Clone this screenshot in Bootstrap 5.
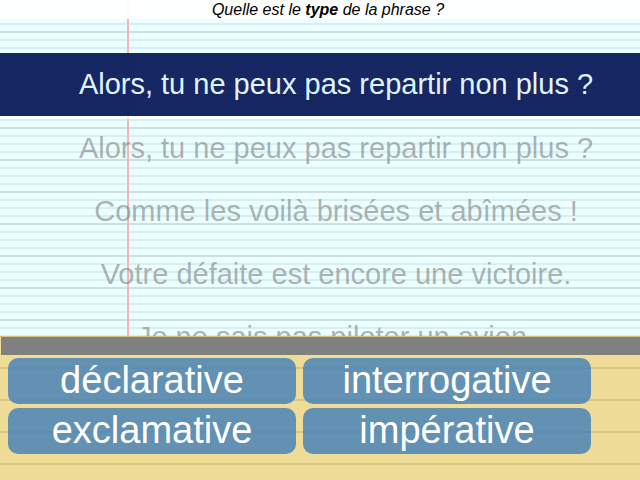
<!DOCTYPE html>
<html lang="fr">
<head>
<meta charset="utf-8">
<meta name="viewport" content="width=device-width, initial-scale=1">
<title>Types de phrases</title>
<link href="https://cdn.jsdelivr.net/npm/bootstrap@5.3.0/dist/css/bootstrap.min.css" rel="stylesheet">
<style>
body { font-family: "Liberation Sans", Arial, sans-serif; color: #000; }
/* school paper: red margin, a dark rule every fourth line */
.paper {
  height: 70vh;
  background:
    linear-gradient(to right, transparent 127px, #f5b5b9 127px, #f5b5b9 129px, transparent 129px),
    repeating-linear-gradient(#cfe0e0 0 1px, transparent 1px 31px, #cfe0e0 31px 32px),
    repeating-linear-gradient(#d9eef2 0 1px, #ebffff 1px 7px, #d9eef2 7px 8px);
}
.question { background: rgba(255,255,255,.95); font-size: 16px; line-height: 19px; padding-left: 16px; margin-bottom: 34px; }
.phrase { font-size: 29px; line-height: 63px; padding-left: 32px; white-space: nowrap; }
.current { background: rgba(13,30,93,.96); color: #e0f4ff; }
.waiting { color: rgba(128,128,128,.6); }
.waiting-list { border-top: 3px solid rgba(255,255,255,.8); }
.waiting-list .phrase:first-child { margin-top: -2px; }
.desk {
  height: 30vh;
  border-top: 1px solid #d9c27d;
  background: repeating-linear-gradient(#eedc97 0 30px, #d8c583 30px 32px);
}
.timer { height: 18px; margin-left: 1px; background: #808080; }
.answers { display: grid; grid-template-columns: 45vw 45vw; column-gap: 7px; row-gap: 4px; padding: 3px 0 0 8px; }
.answer { font-size: 38px; line-height: 44px; padding: 0 0 2px; border: 0; border-radius: 10px; color: #fff; background: rgba(70,130,187,.83); }
.answer:hover { color: #fff; background: #4682b4; }
</style>
<script src="https://cdn.jsdelivr.net/npm/bootstrap@5.3.0/dist/js/bootstrap.bundle.min.js"></script>
</head>
<body class="vh-100 overflow-hidden">
<main class="paper overflow-hidden text-center">
  <p class="question fst-italic">Quelle est le <b>type</b> de la phrase ?</p>
  <div class="phrase current">Alors, tu ne peux pas repartir non plus ?</div>
  <ul class="waiting-list list-unstyled mb-0">
    <li class="phrase waiting">Alors, tu ne peux pas repartir non plus ?</li>
    <li class="phrase waiting">Comme les voilà brisées et abîmées !</li>
    <li class="phrase waiting">Votre défaite est encore une victoire.</li>
    <li class="phrase waiting">Je ne sais pas piloter un avion.</li>
  </ul>
</main>
<footer class="desk overflow-hidden">
  <div class="timer"></div>
  <div class="answers">
    <button type="button" class="btn answer">déclarative</button>
    <button type="button" class="btn answer">interrogative</button>
    <button type="button" class="btn answer">exclamative</button>
    <button type="button" class="btn answer">impérative</button>
  </div>
</footer>
</body>
</html>
